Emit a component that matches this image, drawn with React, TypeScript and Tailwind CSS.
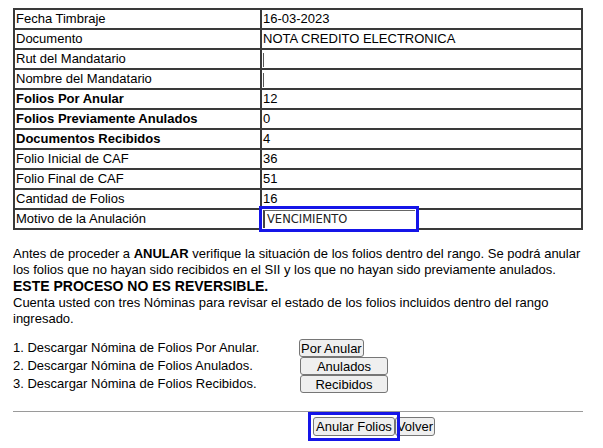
const rows: { label: string; value: string; bold?: boolean }[] = [
  { label: 'Fecha Timbraje', value: '16-03-2023' },
  { label: 'Documento', value: 'NOTA CREDITO ELECTRONICA' },
  { label: 'Rut del Mandatario', value: '' },
  { label: 'Nombre del Mandatario', value: '' },
  { label: 'Folios Por Anular', value: '12', bold: true },
  { label: 'Folios Previamente Anulados', value: '0', bold: true },
  { label: 'Documentos Recibidos', value: '4', bold: true },
  { label: 'Folio Inicial de CAF', value: '36' },
  { label: 'Folio Final de CAF', value: '51' },
  { label: 'Cantidad de Folios', value: '16' },
]

const btn =
  'h-[18px] rounded-[3px] border border-[#767676] bg-[#efefef] text-[13px] leading-none text-black'

export default function App() {
  return (
    <div
      className="min-h-[448px] bg-white px-[13px] pt-[8px] text-[13px] text-black"
      style={{ fontFamily: '"Liberation Sans", Arial, sans-serif' }}
    >
      <table className="w-[570px] border-separate border-spacing-0 border border-[#3a3a3a]">
        <tbody>
          {rows.map((r) => (
            <tr key={r.label} className="h-[20px]">
              <td
                className={`w-[247px] border border-[#3a3a3a] px-[1px] align-middle leading-[16px] ${
                  r.bold ? 'font-bold' : ''
                }`}
              >
                {r.label}
              </td>
              <td className="border border-[#3a3a3a] px-[1px] align-middle leading-[16px]">
                {r.value ? r.value : <span className="inline-block h-[14px] w-px bg-[#555] align-middle" />}
              </td>
            </tr>
          ))}
          <tr className="h-[20px]">
            <td className="border border-[#3a3a3a] px-[1px] leading-[16px]">Motivo de la Anulación</td>
            <td className="relative border border-[#3a3a3a] p-0">
              <div className="absolute left-[-3px] top-[-4px] h-[26px] w-[160px] border-[3px] border-[#1515e8] bg-white p-[1px]">
                <div
                  className="flex h-full items-center border-l-2 border-t border-l-[#444] border-t-[#666] pl-[2px] text-[#222]"
                  style={{ fontFamily: '"DejaVu Sans", Verdana, sans-serif', fontSize: '11.5px' }}
                >
                  VENCIMIENTO
                </div>
              </div>
            </td>
          </tr>
        </tbody>
      </table>

      <p className="mt-[16px] w-[575px] leading-[16px]">
        Antes de proceder a <b>ANULAR</b> verifique la situación de los folios dentro del rango. Se podrá anular
        los folios que no hayan sido recibidos en el SII y los que no hayan sido previamente anulados.
        <br />
        <b className="text-[14px]">ESTE PROCESO NO ES REVERSIBLE.</b>
        <br />
        Cuenta usted con tres Nóminas para revisar el estado de los folios incluidos dentro del rango
        ingresado.
      </p>

      <div className="mt-[12px] flex flex-col">
        <div className="flex h-[18px] items-center">
          <span className="w-[286px]">1. Descargar Nómina de Folios Por Anular.</span>
          <button className={`${btn} px-[1px]`}>Por Anular</button>
        </div>
        <div className="flex h-[18px] items-center">
          <span className="w-[287px]">2. Descargar Nómina de Folios Anulados.</span>
          <button className={`${btn} w-[88px]`}>Anulados</button>
        </div>
        <div className="flex h-[18px] items-center">
          <span className="w-[287px]">3. Descargar Nómina de Folios Recibidos.</span>
          <button className={`${btn} w-[88px]`}>Recibidos</button>
        </div>
      </div>

      <hr className="mt-[18px] w-[570px] border-t border-[#9a9a9a]" />

      <div className="flex pl-[295px]">
        <div className="relative z-10 -mr-[5px] border-[3px] border-[#1515e8] p-[2px]">
          <button className={`${btn} block h-[19px] px-[2px]`}>Anular Folios</button>
        </div>
        <button className={`${btn} mt-[5px] h-[19px] px-[1px]`}>Volver</button>
      </div>
    </div>
  )
}
